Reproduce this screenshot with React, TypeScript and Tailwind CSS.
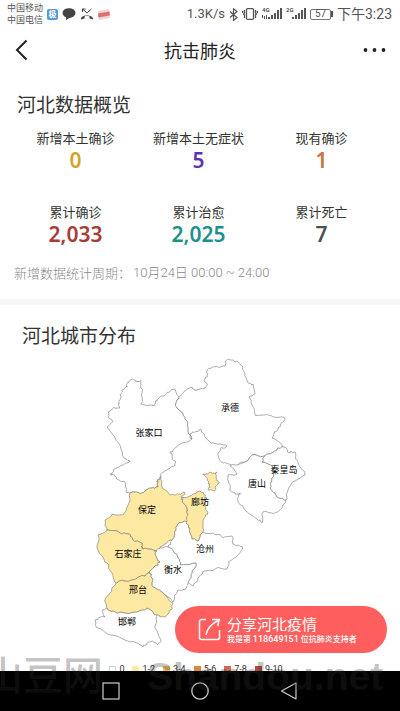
import { clsx } from 'clsx';

type Point = [number, number];

interface Region {
  name: string;
  label?: Point;
  filled?: boolean;
  border: string;
}

const stats = [
  { label: '新增本土确诊', value: '0', color: 'text-[#d3a42c]' },
  { label: '新增本土无症状', value: '5', color: 'text-[#6030b4]' },
  { label: '现有确诊', value: '1', color: 'text-[#c77641]' },
  { label: '累计确诊', value: '2,033', color: 'text-[#a93a39]' },
  { label: '累计治愈', value: '2,025', color: 'text-[#1c918e]' },
  { label: '累计死亡', value: '7', color: 'text-[#4e4e52]' },
];

const legend = [
  { label: '0', color: 'bg-white border border-gray-300' },
  { label: '1-2', color: 'bg-[#fdeba3]' },
  { label: '3-4', color: 'bg-[#eebd50]' },
  { label: '5-6', color: 'bg-[#dc8439]' },
  { label: '7-8', color: 'bg-[#d26b50]' },
  { label: '9-10', color: 'bg-[#b44d39]' },
];

const regions: Region[] = [
  {
    name: '张家口',
    label: [149, 436],
    border:
      '141,381 138,382 134,380 128,382 127,387 122,390 120,395 119,402 120,408 114,407 108,412 108,417 113,421 107,427 115,438 121,449 124,458 130,461 123,465 115,469 110,474 115,476 119,480 125,482 126,492 130,493 142,493 152,488 158,487 157,481 160,477 162,473 168,469 175,465 176,462 172,457 170,452 175,448 182,443 192,439 188,430 186,420 183,413 178,409 176,403 179,397 175,389 166,394 157,400 156,403 152,405 141,404 142,393',
  },
  {
    name: '承德',
    label: [230, 411],
    border:
      '179,397 185,391 192,387 197,390 204,389 207,385 204,380 207,376 207,370 215,367 225,366 225,361 230,360 237,361 243,367 245,375 248,383 253,384 255,393 249,397 252,405 256,416 263,415 270,415 285,418 280,427 274,432 272,438 283,447 277,450 265,456 252,455 245,462 232,466 223,463 218,455 220,449 227,446 220,444 212,443 205,437 200,429 195,432 190,434 192,439 188,430 186,420 183,413 178,409 176,403',
  },
  {
    name: '唐山',
    label: [257, 487],
    border:
      '265,456 252,455 245,462 230,466 237,474 228,475 230,490 235,493 240,493 238,502 243,507 252,515 257,519 262,523 263,512 272,513 280,510 286,500 277,497 270,488 272,478 273,467 262,462',
  },
  {
    name: '秦皇岛',
    label: [284, 473],
    border:
      '265,456 277,450 283,447 290,453 295,452 298,463 305,475 295,481 288,490 286,500 277,497 270,488 272,478 273,467 262,462',
  },
  {
    name: '沧州',
    label: [205, 552],
    border:
      '203,532 213,533 223,538 232,536 235,545 243,547 235,558 230,561 227,569 215,569 205,571 198,578 193,586 188,583 192,573 196,563 180,565 178,558 168,547 172,540 176,530 180,522 188,522 190,529 192,539 198,541',
  },
  {
    name: '衡水',
    label: [173, 573],
    border:
      '160,547 168,547 178,558 180,565 196,563 192,573 188,583 185,590 178,590 173,602 162,592 153,587 152,578 149,572 158,565 160,562 155,553',
  },
  {
    name: '邯郸',
    label: [127, 625],
    border:
      '107,608 103,610 105,617 95,620 98,628 110,635 125,640 137,643 143,647 147,643 152,641 158,645 161,640 155,628 157,615 147,608 133,612 117,613',
  },
  {
    name: '保定',
    label: [147, 513],
    filled: true,
    border:
      '130,493 142,493 152,488 158,487 157,481 160,477 162,483 163,489 170,495 178,494 185,493 182,499 187,508 188,522 180,522 176,530 172,540 160,547 155,551 142,549 142,543 133,540 129,534 120,533 107,530 105,520 112,514 123,515 128,505',
  },
  {
    name: '石家庄',
    label: [128, 557],
    filled: true,
    border:
      '107,530 98,535 97,548 103,557 107,563 112,573 116,583 124,581 132,580 138,577 145,576 149,572 158,565 160,562 155,553 155,551 142,549 142,543 133,540 129,534 120,533',
  },
  {
    name: '邢台',
    label: [138, 593],
    filled: true,
    border:
      '116,583 110,593 105,602 107,608 117,613 133,612 147,608 157,615 165,617 171,610 173,603 162,592 153,587 152,578 149,572 145,576 138,577 132,580 124,581',
  },
  {
    name: '廊坊',
    label: [200, 505],
    filled: true,
    border:
      '183,497 187,497 192,495 197,492 203,492 205,497 204,502 208,512 203,520 203,532 198,541 192,539 190,529 186,523 188,515 187,508 182,499',
  },
  {
    name: '廊坊北',
    filled: true,
    border: '203,474 210,472 217,472 216,478 219,482 216,486 215,491 208,489 210,484 207,480',
  },
];

const toPoints = (border: string) => border.split(' ').map((pair) => pair.split(',').map(Number) as Point);

// Nudges the middle of every edge. The nudge depends only on the edge itself,
// so neighbours that share a border still line up.
const roughen = (points: Point[]): Point[] =>
  points.flatMap((point, i) => {
    const next = points[(i + 1) % points.length];
    const x = (point[0] + next[0]) / 2;
    const y = (point[1] + next[1]) / 2;
    return [point, [x + Math.sin(x * 127.1 + y * 311.7), y + Math.sin(x * 269.5 + y * 183.3)] as Point];
  });

const toPath = (border: string) =>
  `M${roughen(roughen(toPoints(border)))
    .map(([x, y]) => `${x.toFixed(1)} ${y.toFixed(1)}`)
    .join('L')}Z`;

const Signal: React.FC<{ network: string; dual?: boolean }> = ({ network, dual }) => (
  <svg viewBox="0 0 20 14" className="h-3.5 w-5" fill="#555">
    <text x="0" y="5" fontSize="6" fontFamily="Roboto" fontWeight="700">
      {network}
    </text>
    {dual && <path d="M0 8h1v3H0zM2 9h1v3H2zM4 8h1v4H4z" />}
    <path d="M6 10h2v2H6zM9 8h2v4H9zM12 6h2v6h-2zM15 3h2v9h-2zM18 1h2v11h-2z" />
  </svg>
);

const StatusBar: React.FC = () => (
  <div className="flex h-7 shrink-0 items-center justify-between pr-2 pl-[7px] text-[#555]">
    <div className="flex items-center gap-1">
      <div className="text-[9px] leading-3">
        <div>中国移动</div>
        <div>中国电信</div>
      </div>
      <span className="flex size-[11px] items-center justify-center rounded-xs bg-[#5298d3] text-[8px] leading-none font-bold text-white">
        极
      </span>
      <svg viewBox="0 0 14 12" className="h-3 w-3.5" fill="#444">
        <ellipse cx="7" cy="5" rx="6.5" ry="4.8" />
        <path d="M4 8l0 4 5-3z" />
      </svg>
      <svg viewBox="0 0 14 12" className="h-3 w-3.5" fill="none" stroke="#444">
        <path d="M2.500 4V1h3M2.500 1l4.500 4 4.500-4" />
        <path d="M1 11.500c-1-5.500 13-5.500 12 0l-3.500-1V8.500c-2-.6-3-.6-5 0v2z" fill="#444" stroke="none" />
      </svg>
      <svg viewBox="0 0 12 11" className="h-[11px] w-3">
        <path d="M0 2l11-2 1 9-11 2z" fill="#f0d5d2" />
        <path d="M0 4.500l11.500-2 .4 4-11.500 2z" fill="#e0706f" />
      </svg>
    </div>
    <div className="flex items-center gap-1">
      <span className="font-[Roboto] text-[13px]">1.3K/s</span>
      <svg viewBox="0 0 9 13" className="h-[13px] w-[9px]" fill="none" stroke="#555" strokeWidth="1.200">
        <path d="M1 3.500l7 6-3.500 3V.800L8 3.500l-7 6" />
      </svg>
      <svg viewBox="0 0 16 12" className="h-3 w-4" fill="none" stroke="#555" strokeWidth="1.300">
        <rect x="4.500" y=".7" width="7" height="10.600" rx="1" />
        <path d="M2.500 2v3l-1 1 1 1v3M13.500 2v3l1 1-1 1v3M.600 3v2M15.400 3v2" />
      </svg>
      <Signal network="4G" dual />
      <Signal network="2G" />
      <div className="flex items-center">
        <span className="flex h-[11px] w-[21px] items-center justify-center rounded-xs border border-[#777] font-[Roboto] text-[10px] leading-none">
          57
        </span>
        <span className="h-1.5 w-0.5 bg-[#555]" />
      </div>
      <span className="font-[Roboto,'Noto_Sans_CJK_SC',sans-serif] text-sm">下午3:23</span>
    </div>
  </div>
);

const Header: React.FC = () => (
  <header className="grid h-11 shrink-0 grid-cols-[1fr_auto_1fr] items-center px-3.5">
    <button type="button" aria-label="返回" className="justify-self-start">
      <svg viewBox="0 0 16 22" className="h-[22px] w-4" fill="none" stroke="#222" strokeWidth="2">
        <path d="M12.500 1.500L3 11l9.500 9.500" />
      </svg>
    </button>
    <h1 className="text-lg text-[#222]">抗击肺炎</h1>
    <button type="button" aria-label="更多" className="justify-self-end">
      <svg viewBox="0 0 24 6" className="h-1.5 w-6" fill="#222">
        <circle cx="3.500" cy="3" r="1.900" />
        <circle cx="12.500" cy="3" r="1.900" />
        <circle cx="21.500" cy="3" r="1.900" />
      </svg>
    </button>
  </header>
);

const Overview: React.FC = () => (
  <section className="pt-5 pb-[15px]">
    <h2 className="pl-[17px] text-[19px] leading-6 text-[#333]">河北数据概览</h2>
    <dl className="mt-3 grid grid-cols-3 gap-y-[30px] pr-[17px] pl-3.5 text-center">
      {stats.map(({ label, value, color }) => (
        <div key={label}>
          <dt className="text-[13px] leading-5 text-[#333]">{label}</dt>
          <dd className={clsx("font-['Noto_Sans'] text-[21px] leading-6 font-semibold", color)}>{value}</dd>
        </div>
      ))}
    </dl>
    <p className="mt-4 flex gap-0.5 pl-3.5 text-[13px] leading-[22px] font-light text-[#888]">
      <span>新增数据统计周期：</span>
      <span className="font-[Roboto,'Noto_Sans_CJK_SC',sans-serif]">10月24日 00:00 ~ 24:00</span>
    </p>
  </section>
);

const CityMap: React.FC = () => (
  <section className="pt-[18px]">
    <h2 className="pl-[22px] text-[19px] leading-6 text-[#333]">河北城市分布</h2>
    <svg viewBox="0 350 400 310" className="mt-[3px] w-full" role="img" aria-label="河北城市分布">
      {regions.map(({ name, filled, border }) => (
        <path
          key={name}
          d={toPath(border)}
          fill={filled ? '#fee9a3' : '#fff'}
          stroke="#777"
          strokeWidth="0.600"
          strokeLinejoin="round"
        />
      ))}
      {regions.map(
        ({ name, label }) =>
          label && (
            <text key={name} x={label[0]} y={label[1]} fontSize="9" textAnchor="middle" fill="#000">
              {name}
            </text>
          ),
      )}
    </svg>
    <ul className="flex justify-center gap-2 pr-2 font-[Roboto] text-[9px] leading-[18px] text-[#333]">
      {legend.map(({ label, color }) => (
        <li key={label} className="flex items-center gap-[3px]">
          <span className={clsx('size-[7px]', color)} />
          {label}
        </li>
      ))}
    </ul>
  </section>
);

const ShareButton: React.FC = () => (
  <button
    type="button"
    className="absolute right-[13px] bottom-[18px] flex h-[47px] w-[212px] items-center gap-1.5 rounded-full bg-[#fe5f5e] pl-[23px] text-left text-white"
  >
    <svg viewBox="0 0 23 23" className="size-[23px]" fill="none" stroke="#fff" strokeWidth="1.500">
      <path d="M8 1.500H3.500a2 2 0 0 0-2 2v16a2 2 0 0 0 2 2h16a2 2 0 0 0 2-2V12" />
      <path d="M8 17c1-7 5-11 13-15M14 1.500h7.200l-1.500 6.500" />
    </svg>
    <span>
      <span className="block text-[15px] leading-[18px]">分享河北疫情</span>
      <span className="block text-[8px] leading-3 font-medium">
        我是第 <span className="font-[Roboto] text-[9px]">118649151</span> 位抗肺炎支持者
      </span>
    </span>
  </button>
);

const NavBar: React.FC = () => (
  <nav className="flex h-10 shrink-0 items-center justify-center gap-[71px] bg-black">
    <button type="button" aria-label="最近任务">
      <svg viewBox="0 0 18 18" className="size-[18px]" fill="none" stroke="#ccc" strokeWidth="1.200">
        <rect x="1" y="1" width="16" height="16" />
      </svg>
    </button>
    <button type="button" aria-label="主屏幕">
      <svg viewBox="0 0 18 18" className="size-[18px]" fill="none" stroke="#ccc" strokeWidth="1.300">
        <circle cx="9" cy="9" r="8.200" />
      </svg>
    </button>
    <button type="button" aria-label="后退">
      <svg viewBox="0 0 18 18" className="size-[18px]" fill="none" stroke="#ccc" strokeWidth="1.200">
        <path d="M16 1v16L1.500 9z" strokeLinejoin="round" />
      </svg>
    </button>
  </nav>
);

const App: React.FC = () => (
  <div className="relative flex h-screen flex-col overflow-hidden bg-white font-['Noto_Sans_CJK_SC',sans-serif]">
    <StatusBar />
    <Header />
    <main className="relative min-h-0 flex-1 overflow-hidden">
      <Overview />
      <div className="h-1.5 bg-[#f7f6f8]" />
      <CityMap />
      <ShareButton />
    </main>
    <NavBar />
    <div className="pointer-events-none absolute bottom-3.5 -left-[17px] flex items-start gap-6 whitespace-nowrap text-[#303030]/30">
      <span className="text-[40px] leading-8 font-medium">山豆网</span>
      <span className="pl-5 font-['Liberation_Sans'] text-[39px] leading-10 font-bold">Shandou.net</span>
    </div>
  </div>
);

export default App;
